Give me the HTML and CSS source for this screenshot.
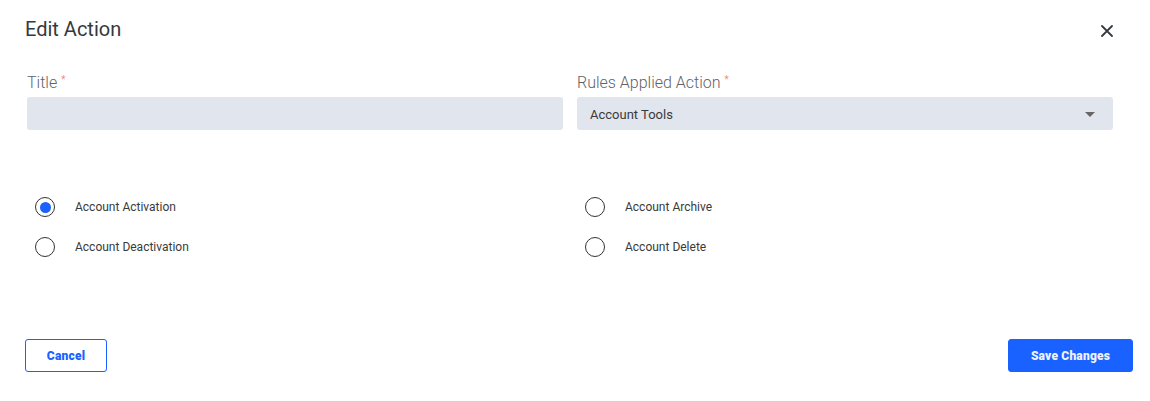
FILE: index.html
```html
<!DOCTYPE html>
<html>
<head>
<meta charset="utf-8">
<link rel="stylesheet" href="styles.css">
</head>
<body>
<div class="modal">
  <div class="header">
    <h1 class="title">Edit Action</h1>
    <button class="close" aria-label="Close">
      <svg width="12" height="12" viewBox="0 0 12 12"><path d="M1 1L11 11M11 1L1 11" stroke="#343a40" stroke-width="1.8" stroke-linecap="round"/></svg>
    </button>
  </div>
  <div class="fields">
    <div class="field">
      <label class="label">Title<span class="req">*</span></label>
      <div class="input"></div>
    </div>
    <div class="field">
      <label class="label">Rules Applied Action<span class="req">*</span></label>
      <div class="input select">
        <span>Account Tools</span>
        <span class="caret"></span>
      </div>
    </div>
  </div>
  <div class="radios">
    <label class="radio"><span class="dot checked"></span>Account Activation</label>
    <label class="radio"><span class="dot"></span>Account Archive</label>
    <label class="radio"><span class="dot"></span>Account Deactivation</label>
    <label class="radio"><span class="dot"></span>Account Delete</label>
  </div>
  <div class="footer">
    <button class="btn btn-outline">Cancel</button>
    <button class="btn btn-primary">Save Changes</button>
  </div>
</div>
</body>
</html>
```
FILE: styles.css
```css
* { box-sizing: border-box; }
body {
  margin: 0;
  font-family: Roboto, "Liberation Sans", sans-serif;
  background: #fff;
  color: #333;
}
.modal {
  padding: 16px 17px 0 25px;
}
.header {
  display: flex;
  justify-content: space-between;
  align-items: center;
  padding-right: 20px;
  height: 26px;
}
.title {
  margin: 0;
  font-size: 20px;
  line-height: 26px;
  font-weight: 400;
  color: #343a40;
}
.close {
  border: 0;
  background: none;
  padding: 0;
  width: 12px;
  height: 12px;
  display: flex;
  margin-top: 4px;
  cursor: pointer;
}
.fields, .radios {
  display: grid;
  grid-template-columns: 1fr 1fr;
  column-gap: 14px;
  margin: 0 20px 0 2px;
}
.fields { margin-top: 31px; }
.label {
  display: block;
  font-size: 16px;
  line-height: 20px;
  font-weight: 300;
  color: #5f6368;
}
.req {
  color: #ee6a55;
  font-size: 10px;
  vertical-align: top;
  margin-left: 4px;
  line-height: 14px;
}
.input {
  margin-top: 4px;
  height: 33px;
  background: #e1e5ee;
  border-radius: 3px;
}
.select {
  display: flex;
  align-items: center;
  justify-content: space-between;
  padding: 1px 18px 0 13px;
  font-size: 13px;
  color: #3a3a3a;
}
.caret {
  width: 0;
  height: 0;
  border-left: 5px solid transparent;
  border-right: 5px solid transparent;
  border-top: 5px solid #666;
}
.radios {
  margin-top: 57px;
}
.radio {
  display: flex;
  align-items: center;
  height: 40px;
  padding-left: 8px;
  font-size: 12px;
  color: #3a3a3a;
}
.dot {
  width: 20px;
  height: 20px;
  border: 1.5px solid #333;
  border-radius: 50%;
  margin-right: 20px;
  display: flex;
  align-items: center;
  justify-content: center;
}
.dot.checked::after {
  content: "";
  width: 11px;
  height: 11px;
  border-radius: 50%;
  background: #1a62ff;
}
.footer {
  display: flex;
  justify-content: space-between;
  margin-top: 72px;
}
.btn {
  height: 33px;
  border-radius: 3px;
  font-family: Roboto, "Liberation Sans", sans-serif;
  font-size: 12px;
  font-weight: 900;
  letter-spacing: 0.2px;
  cursor: pointer;
}
.btn-outline {
  width: 82px;
  background: #fff;
  border: 1px solid #1a62ff;
  color: #1a62ff;
}
.btn-primary {
  width: 125px;
  background: #1a62ff;
  border: 1px solid #1a62ff;
  color: #eef2ff;
}
```
